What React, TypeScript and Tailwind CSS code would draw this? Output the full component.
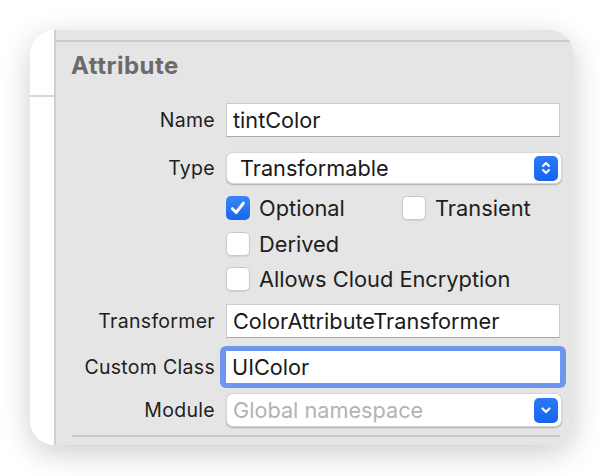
import React from "react";

const font = { fontFamily: 'Inter, "Noto Sans", sans-serif' };

function Checkbox({ checked }: { checked?: boolean }) {
  if (checked) {
    return (
      <div className="w-[24px] h-[24px] rounded-[5px] bg-gradient-to-b from-[#3b86f8] to-[#1766ec] flex items-center justify-center shrink-0">
        <svg width="18" height="18" viewBox="0 0 16 16" fill="none">
          <path d="M3 8.6 L6.4 12 L12.8 3.6" stroke="white" strokeWidth="2.6" strokeLinecap="round" strokeLinejoin="round" />
        </svg>
      </div>
    );
  }
  return (
    <div className="w-[24px] h-[24px] rounded-[5px] bg-white border border-[#c9c9c9] shadow-[0_1px_1px_rgba(0,0,0,0.08)] shrink-0" />
  );
}

function BlueBtn({ kind }: { kind: "updown" | "down" }) {
  return (
    <div className="w-[24px] h-[25px] rounded-[5px] bg-gradient-to-b from-[#2a7bf7] to-[#1564ee] flex items-center justify-center shrink-0">
      {kind === "updown" ? (
        <svg width="12" height="18" viewBox="0 0 12 18" fill="none">
          <path d="M3 7 L6 4 L9 7" stroke="white" strokeWidth="2" strokeLinecap="round" strokeLinejoin="round" />
          <path d="M3 11 L6 14 L9 11" stroke="white" strokeWidth="2" strokeLinecap="round" strokeLinejoin="round" />
        </svg>
      ) : (
        <svg width="12" height="12" viewBox="0 0 12 12" fill="none">
          <path d="M2.5 4.5 L6 8 L9.5 4.5" stroke="white" strokeWidth="2.2" strokeLinecap="round" strokeLinejoin="round" />
        </svg>
      )}
    </div>
  );
}

function Label({ children }: { children: React.ReactNode }) {
  return (
    <div className="w-[159px] shrink-0 text-right text-[19.5px] leading-[24px] text-[#1e1e1e] tracking-[0.3px]">
      {children}
    </div>
  );
}

function TextField({ value }: { value: string }) {
  return (
    <div className="w-[334px] h-[34px] bg-white border border-[#cdcdcd] border-b-[#a9a9a9] flex items-center pl-[6px] text-[21.7px] leading-[24px] text-[#1a1a1a]">
      {value}
    </div>
  );
}

function Check({ checked, text }: { checked?: boolean; text: string }) {
  return (
    <div className="flex items-center gap-[9px] text-[21.8px] leading-[24px] text-[#1e1e1e]">
      <Checkbox checked={checked} />
      <span>{text}</span>
    </div>
  );
}

export default function App() {
  return (
    <div className="w-[604px] h-[476px] bg-white pt-[30px] pl-[30px]" style={font}>
      <div className="w-[544px] h-[415px] rounded-[25px] overflow-hidden flex shadow-[0_8px_30px_rgba(0,0,0,0.2)]">
        {/* left strip */}
        <div className="w-[26px] shrink-0 bg-white border-r-2 border-[#cfcfcf] flex flex-col">
          <div className="h-[67px] shrink-0 border-b-2 border-[#d6d6d6]" />
        </div>
        {/* right panel */}
        <div className="flex-1 bg-[#e5e5e5] flex flex-col">
          <div className="h-[12px] shrink-0 border-b-2 border-[#cbcbcb]" />
          <div className="shrink-0 mt-[10px] h-[28px] leading-[28px] pl-[15px] text-[24px] font-bold text-[#6b6b6b] tracking-[0.5px]">
            Attribute
          </div>

          {/* Name */}
          <div className="shrink-0 mt-[23px] flex items-center gap-[11px]">
            <Label>Name</Label>
            <TextField value="tintColor" />
          </div>

          {/* Type */}
          <div className="shrink-0 mt-[15px] flex items-center gap-[11px]">
            <Label>Type</Label>
            <div className="w-[336px] h-[32px] bg-white rounded-[7px] border border-[#d6d6d6] shadow-[0_1px_1.5px_rgba(0,0,0,0.25)] flex items-center justify-between pl-[13px] pr-[3px] text-[21.7px] leading-[24px] text-[#1a1a1a]">
              <span>Transformable</span>
              <BlueBtn kind="updown" />
            </div>
          </div>

          {/* Optional / Transient */}
          <div className="shrink-0 mt-[12px] flex items-center">
            <div className="w-[170px] shrink-0" />
            <div className="w-[176px] shrink-0">
              <Check checked text="Optional" />
            </div>
            <Check text="Transient" />
          </div>

          {/* Derived */}
          <div className="shrink-0 mt-[12px] flex items-center">
            <div className="w-[170px] shrink-0" />
            <Check text="Derived" />
          </div>

          {/* Allows Cloud Encryption */}
          <div className="shrink-0 mt-[11px] flex items-center">
            <div className="w-[170px] shrink-0" />
            <Check text="Allows Cloud Encryption" />
          </div>

          {/* Transformer */}
          <div className="shrink-0 mt-[13px] flex items-center gap-[11px]">
            <Label>Transformer</Label>
            <TextField value="ColorAttributeTransformer" />
          </div>

          {/* Custom Class */}
          <div className="shrink-0 mt-[8px] flex items-center gap-[5px]">
            <Label>Custom Class</Label>
            <div className="w-[346px] h-[42px] rounded-[6px] bg-[#6e96ec] py-[5px] px-[6px]">
              <div className="w-full h-full bg-white flex items-center pl-[6px] text-[21.7px] leading-[24px] text-[#1a1a1a]">
                UIColor
              </div>
            </div>
          </div>

          {/* Module */}
          <div className="shrink-0 mt-[5px] flex items-center gap-[11px]">
            <Label>Module</Label>
            <div className="w-[336px] h-[34px] bg-white rounded-[7px] border border-[#d6d6d6] shadow-[0_1px_1.5px_rgba(0,0,0,0.25)] flex items-center justify-between pl-[6px] pr-[3px] text-[21.7px] leading-[24px] text-[#b3b3b3]">
              <span>Global namespace</span>
              <BlueBtn kind="down" />
            </div>
          </div>

          <div className="shrink-0 mt-[8px] ml-[16px] mr-[14px] h-[2px] bg-[#cbcbcb]" />
        </div>
      </div>
    </div>
  );
}
